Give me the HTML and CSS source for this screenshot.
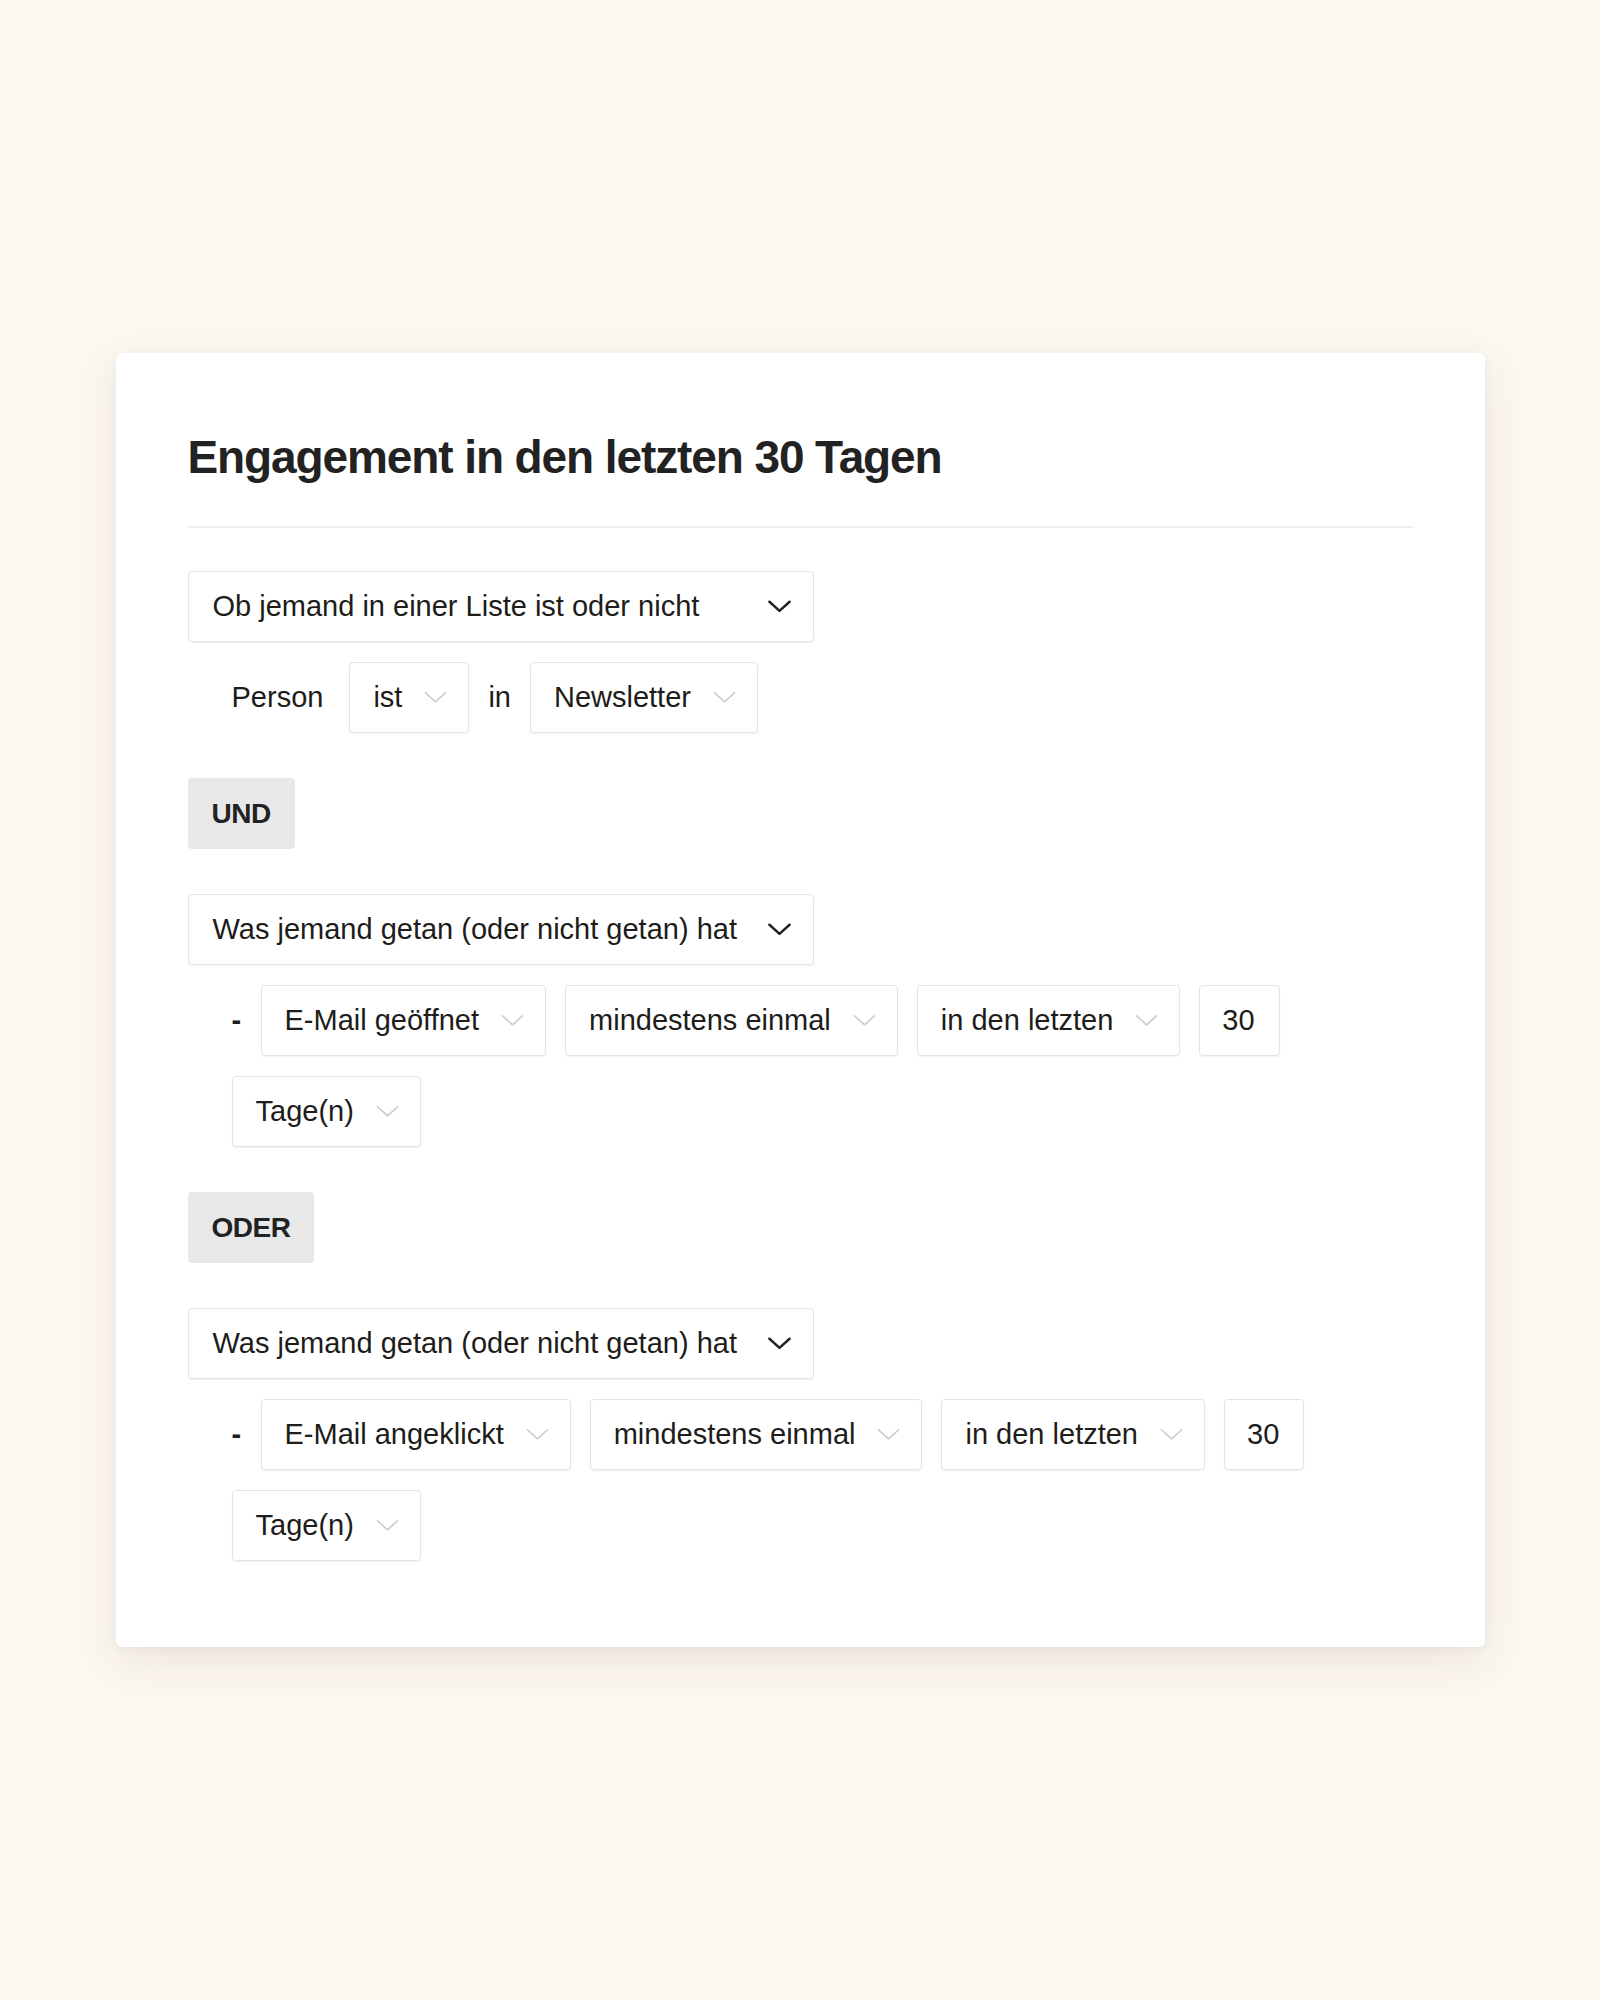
FILE: index.html
```html
<!DOCTYPE html>
<html lang="de">
<head>
<meta charset="utf-8">
<title>Engagement in den letzten 30 Tagen</title>
<link rel="stylesheet" href="styles.css">
</head>
<body>
<main class="card">
  <h1 class="title">Engagement in den letzten 30 Tagen</h1>
  <hr class="divider">
  <div class="filters">
    <section class="group">
      <div class="select main">
        <span>Ob jemand in einer Liste ist oder nicht</span>
        <svg class="chev dark" viewBox="0 0 24 13"><path d="M1.5 1.5 L12 11 L22.5 1.5"/></svg>
      </div>
      <div class="row">
        <span class="label person">Person</span>
        <div class="select"><span>ist</span><svg class="chev" viewBox="0 0 24 13"><path d="M1.5 1.5 L12 11 L22.5 1.5"/></svg></div>
        <span class="label">in</span>
        <div class="select"><span>Newsletter</span><svg class="chev" viewBox="0 0 24 13"><path d="M1.5 1.5 L12 11 L22.5 1.5"/></svg></div>
      </div>
    </section>

    <div class="connector">UND</div>

    <section class="group">
      <div class="select main">
        <span>Was jemand getan (oder nicht getan) hat</span>
        <svg class="chev dark" viewBox="0 0 24 13"><path d="M1.5 1.5 L12 11 L22.5 1.5"/></svg>
      </div>
      <div class="row">
        <span class="label dash">-</span>
        <div class="select"><span>E-Mail geöffnet</span><svg class="chev" viewBox="0 0 24 13"><path d="M1.5 1.5 L12 11 L22.5 1.5"/></svg></div>
        <div class="select"><span>mindestens einmal</span><svg class="chev" viewBox="0 0 24 13"><path d="M1.5 1.5 L12 11 L22.5 1.5"/></svg></div>
        <div class="select"><span>in den letzten</span><svg class="chev" viewBox="0 0 24 13"><path d="M1.5 1.5 L12 11 L22.5 1.5"/></svg></div>
        <div class="select num"><span>30</span></div>
        <div class="select"><span>Tage(n)</span><svg class="chev" viewBox="0 0 24 13"><path d="M1.5 1.5 L12 11 L22.5 1.5"/></svg></div>
      </div>
    </section>

    <div class="connector">ODER</div>

    <section class="group">
      <div class="select main">
        <span>Was jemand getan (oder nicht getan) hat</span>
        <svg class="chev dark" viewBox="0 0 24 13"><path d="M1.5 1.5 L12 11 L22.5 1.5"/></svg>
      </div>
      <div class="row">
        <span class="label dash">-</span>
        <div class="select"><span>E-Mail angeklickt</span><svg class="chev" viewBox="0 0 24 13"><path d="M1.5 1.5 L12 11 L22.5 1.5"/></svg></div>
        <div class="select"><span>mindestens einmal</span><svg class="chev" viewBox="0 0 24 13"><path d="M1.5 1.5 L12 11 L22.5 1.5"/></svg></div>
        <div class="select"><span>in den letzten</span><svg class="chev" viewBox="0 0 24 13"><path d="M1.5 1.5 L12 11 L22.5 1.5"/></svg></div>
        <div class="select num"><span>30</span></div>
        <div class="select"><span>Tage(n)</span><svg class="chev" viewBox="0 0 24 13"><path d="M1.5 1.5 L12 11 L22.5 1.5"/></svg></div>
      </div>
    </section>
  </div>
</main>
</body>
</html>
```

FILE: styles.css
```css
* { box-sizing: border-box; }

html, body {
  margin: 0;
  padding: 0;
  background: #fdf7f1;
}

body {
  font-family: "Liberation Sans", Arial, sans-serif;
  color: #201c19;
  min-height: 2000px;
}

.card {
  width: 1369px;
  margin: 353px auto 0;
  background: #ffffff;
  border-radius: 6px;
  box-shadow: 0 14px 44px rgba(60, 45, 30, 0.09), 0 2px 8px rgba(60, 45, 30, 0.04);
  padding: 81px 72px 86px;
}

.title {
  margin: 0;
  font-size: 46px;
  line-height: 46px;
  font-weight: 700;
  letter-spacing: -1.1px;
  color: #222222;
}

.divider {
  margin: 46px 0 43px;
  border: 0;
  height: 2px;
  background: #eeeeee;
}

.filters {
  display: flex;
  flex-direction: column;
  align-items: flex-start;
  gap: 45px;
}

.group {
  display: flex;
  flex-direction: column;
  gap: 20px;
  width: 100%;
}

.row {
  display: flex;
  flex-wrap: wrap;
  align-items: center;
  gap: 20px 19px;
  padding-left: 44px;
}

.label {
  font-size: 29px;
  line-height: 71px;
}

.label.person {
  margin-right: 7px;
}

.dash {
  width: 10px;
  font-weight: 700;
}

.select {
  height: 71px;
  display: inline-flex;
  align-items: center;
  gap: 22px;
  padding: 0 21px 0 23px;
  background: #ffffff;
  border: 1px solid #e4e4e4;
  border-radius: 4px;
  box-shadow: 0 1px 2px rgba(0, 0, 0, 0.06);
  font-size: 29px;
  white-space: nowrap;
}

.select.main {
  width: 626px;
  justify-content: space-between;
  padding: 0 22px 0 24px;
}

.select.num {
  padding: 0 24px 0 22px;
}

.chev {
  width: 23px;
  height: 13px;
  flex: none;
}

.chev path {
  fill: none;
  stroke: #c9c9c9;
  stroke-width: 1.6;
  stroke-linecap: round;
  stroke-linejoin: round;
}

.chev.dark path {
  stroke: #222222;
  stroke-width: 2.6;
}

.connector {
  height: 71px;
  display: flex;
  align-items: center;
  padding: 0 24px;
  background: #e8e8e8;
  border-radius: 4px;
  font-size: 28px;
  font-weight: 700;
  letter-spacing: -0.5px;
  color: #222222;
}
```
